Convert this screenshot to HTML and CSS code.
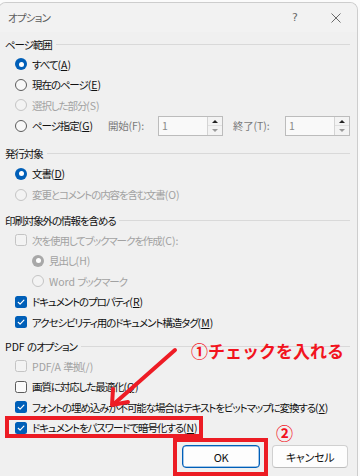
FILE: index.html
```html
<!DOCTYPE html>
<html lang="ja">
<head>
<meta charset="utf-8">
<title>オプション</title>
<link rel="stylesheet" href="styles.css">
</head>
<body>
<div class="dialog">
  <div class="titlebar">
    <span class="title">オプション</span>
    <span class="tb-help">?</span>
    <span class="tb-close"><svg width="10" height="10" viewBox="0 0 10 10"><path d="M0.5 0.5 L9.5 9.5 M9.5 0.5 L0.5 9.5" stroke="#6a6a6a" stroke-width="1" fill="none"/></svg></span>
  </div>
  <div class="content">
    <section class="group g1">
      <div class="ghead"><span>ページ範囲</span></div>
      <div class="row"><span class="radio on"></span><span>すべて<span class="lat">(<u>A</u>)</span></span></div>
      <div class="row"><span class="radio"></span><span>現在のページ<span class="lat">(<u>E</u>)</span></span></div>
      <div class="row disabled"><span class="radio"></span><span>選択した部分<span class="lat">(S)</span></span></div>
      <div class="row"><span class="radio"></span><span class="pg-label">ページ指定<span class="lat">(<u>G</u>)</span></span>
        <span class="field-label fl1">開始<span class="lat">(F):</span></span>
        <span class="spin"><span class="spin-val">1</span><span class="spin-btns"><span class="sb up"></span><span class="sb dn"></span></span></span>
        <span class="field-label fl2">終了<span class="lat">(T):</span></span>
        <span class="spin"><span class="spin-val">1</span><span class="spin-btns"><span class="sb up"></span><span class="sb dn"></span></span></span>
      </div>
    </section>
    <section class="group g2">
      <div class="ghead"><span>発行対象</span></div>
      <div class="row r21"><span class="radio on"></span><span>文書<span class="lat">(<u>D</u>)</span></span></div>
      <div class="row r21 disabled"><span class="radio"></span><span>変更とコメントの内容を含む文書<span class="lat">(O)</span></span></div>
    </section>
    <section class="group g3">
      <div class="ghead"><span>印刷対象外の情報を含める</span></div>
      <div class="row disabled"><span class="check"></span><span>次を使用してブックマークを作成<span class="lat">(C):</span></span></div>
      <div class="row sub disabled"><span class="radio on"></span><span>見出し<span class="lat">(H)</span></span></div>
      <div class="row sub disabled"><span class="radio"></span><span><span class="lat">Word </span>ブックマーク</span></div>
      <div class="row"><span class="check on"><svg width="12" height="12" viewBox="0 0 12 12"><path d="M3.2 6.3 L5.1 8.1 L8.9 4.2" stroke="#fff" stroke-width="1.2" fill="none" stroke-linecap="round" stroke-linejoin="round"/></svg></span><span>ドキュメントのプロパティ<span class="lat">(<u>R</u>)</span></span></div>
      <div class="row"><span class="check on"><svg width="12" height="12" viewBox="0 0 12 12"><path d="M3.2 6.3 L5.1 8.1 L8.9 4.2" stroke="#fff" stroke-width="1.2" fill="none" stroke-linecap="round" stroke-linejoin="round"/></svg></span><span>アクセシビリティ用のドキュメント構造タグ<span class="lat">(<u>M</u>)</span></span></div>
    </section>
    <section class="group g4">
      <div class="ghead"><span><span class="lat">PDF </span>のオプション</span></div>
      <div class="row disabled"><span class="check"></span><span><span class="lat">PDF/A </span>準拠<span class="lat">(/)</span></span></div>
      <div class="row"><span class="check"></span><span>画質に対応した最適化<span class="lat">(<u>Q</u>)</span></span></div>
      <div class="row"><span class="check on"><svg width="12" height="12" viewBox="0 0 12 12"><path d="M3.2 6.3 L5.1 8.1 L8.9 4.2" stroke="#fff" stroke-width="1.2" fill="none" stroke-linecap="round" stroke-linejoin="round"/></svg></span><span>フォントの埋め込みが不可能な場合はテキストをビットマップに変換する<span class="lat">(<u>X</u>)</span></span></div>
      <div class="row"><span class="check on"><svg width="12" height="12" viewBox="0 0 12 12"><path d="M3.2 6.3 L5.1 8.1 L8.9 4.2" stroke="#fff" stroke-width="1.2" fill="none" stroke-linecap="round" stroke-linejoin="round"/></svg></span><span>ドキュメントをパスワードで暗号化する<span class="lat">(<u>N</u>)</span></span></div>
    </section>
    <div class="buttons">
      <button class="btn default">OK</button>
      <button class="btn">キャンセル</button>
    </div>
  </div>
</div>
<div class="annot">
  <svg class="arrow" width="360" height="476" viewBox="0 0 360 476">
    <g stroke="#ee1c25" stroke-width="4" stroke-linecap="round" stroke-linejoin="round" fill="none">
      <path d="M175 350 L115 403"/>
      <path d="M113 389 L112 405 L128 402"/>
    </g>
  </svg>
  <div class="note1">①チェックを入れる</div>
  <div class="note2">②</div>
  <div class="hl hl-row"></div>
  <div class="hl hl-ok"></div>
</div>
</body>
</html>
```

FILE: styles.css
```css
html, body {
  margin: 0;
  padding: 0;
}
body {
  width: 360px;
  height: 476px;
  overflow: hidden;
  position: relative;
  background: #fbfbfb;
  font-family: "Noto Sans CJK JP", "Noto Sans", sans-serif;
  font-size: 10.5px;
  color: #111;
  font-feature-settings: "palt";
  letter-spacing: -1.1px;
}
.lat { letter-spacing: 0; }
.dialog {
  margin: 2px 0 0 -2px;
  width: 360px;
  height: 480px;
  box-sizing: border-box;
  border: 1px solid #cdcdcd;
  border-bottom: none;
  border-radius: 8px 8px 0 0;
  background: #f0f0f0;
  overflow: hidden;
}
.titlebar {
  height: 29px;
  display: flex;
  align-items: center;
  padding: 0 16px 0 9px;
  background: #f2f2f2;
}
.title {
  color: #5c5c5c;
  font-size: 10.5px;
  letter-spacing: -0.8px;
}
.tb-help {
  margin-left: auto;
  width: 12px;
  text-align: center;
  color: #6a6a6a;
  font-family: "DejaVu Sans", sans-serif;
  font-size: 11px;
  letter-spacing: 0;
}
.tb-close {
  margin-left: 30px;
  width: 10px;
  height: 10px;
  display: flex;
}
.content {
  padding: 2px 7px 0 6px;
}
.group { display: flex; flex-direction: column; }
.g2 { margin-top: 7px; }
.g3 { margin-top: 5px; }
.g4 { margin-top: 3.5px; }
.ghead {
  height: 20px;
  display: flex;
  align-items: center;
  gap: 4px;
  color: #111;
}
.ghead::after {
  content: "";
  flex: 1;
  height: 1px;
  background: #d9d9d9;
}
.row {
  height: 20.5px;
  display: flex;
  align-items: center;
  padding-left: 10px;
  white-space: nowrap;
}
.row.r21 { height: 21px; }
.row.sub { padding-left: 27px; }
.row u { text-underline-offset: 1px; }
.row.disabled { color: #a2a2a2; }

.radio {
  width: 12px;
  height: 12px;
  box-sizing: border-box;
  border-radius: 50%;
  border: 1px solid #5b5b5b;
  background: #f8f8f8;
  margin-right: 5px;
  flex: none;
  position: relative;
}
.radio.on {
  border: none;
  background: #005fb8;
}
.radio.on::after {
  content: "";
  position: absolute;
  left: 3.5px;
  top: 3.5px;
  width: 5px;
  height: 5px;
  border-radius: 50%;
  background: #fff;
}
.disabled .radio { border-color: #c4c4c4; background: #f3f3f3; }
.disabled .radio.on { border: none; background: #a8a8a8; }

.check {
  width: 12px;
  height: 12px;
  box-sizing: border-box;
  border-radius: 2.5px;
  border: 1px solid #5b5b5b;
  background: #fafafa;
  margin-right: 5px;
  flex: none;
  display: flex;
}
.check.on {
  border: none;
  background: #005fb8;
}
.disabled .check { border-color: #c4c4c4; background: #f3f3f3; }

.pg-label { width: 76px; flex: none; }
.field-label {
  color: #7a7a7a;
  flex: none;
  letter-spacing: -0.3px;
}
.fl1 { width: 50px; }
.fl2 { width: 52px; margin-left: 10px; }
.spin {
  width: 65px;
  height: 20px;
  box-sizing: border-box;
  border: 1px solid #bcbcbc;
  background: #f9f9f9;
  display: flex;
  flex: none;
}
.spin-val {
  flex: 1;
  padding-left: 3px;
  color: #8a8a8a;
  line-height: 18px;
}
.spin-btns {
  width: 14px;
  display: flex;
  flex-direction: column;
  border-left: 1px solid #d4d4d4;
}
.sb {
  flex: 1;
  position: relative;
  background: #f3f3f3;
}
.sb.up { border-bottom: 1px solid #e0e0e0; }
.sb::after {
  content: "";
  position: absolute;
  left: 4px;
  top: 3px;
  border-left: 3px solid transparent;
  border-right: 3px solid transparent;
}
.sb.up::after { border-bottom: 3px solid #222; }
.sb.dn::after { border-top: 3px solid #9a9a9a; top: 3px; }

.buttons {
  margin-top: 7px;
  display: flex;
  justify-content: flex-end;
  gap: 12px;
  padding-right: 2px;
}
.btn {
  height: 23px;
  box-sizing: border-box;
  border: 1px solid #d0d0d0;
  border-bottom-color: #bdbdbd;
  border-radius: 4px;
  background: #fdfdfd;
  font-family: "Noto Sans CJK JP", "Noto Sans", sans-serif;
  font-size: 11px;
  font-feature-settings: "palt";
  letter-spacing: -0.3px;
  color: #111;
  padding: 0;
  width: 76px;
}
.btn.default {
  width: 78px;
  border: 1px solid #005fb8;
  box-shadow: inset 0 0 0 0.5px #4a8fd3;
}

.annot {
  position: absolute;
  left: 0;
  top: 0;
  width: 360px;
  height: 476px;
  pointer-events: none;
}
.arrow { position: absolute; left: 0; top: 0; }
.note1 {
  position: absolute;
  left: 191px;
  top: 340px;
  font-size: 17px;
  line-height: 22px;
  font-weight: 700;
  color: #f2141e;
  letter-spacing: 0;
  font-feature-settings: normal;
}
.note2 {
  position: absolute;
  left: 276px;
  top: 422px;
  font-size: 17px;
  line-height: 22px;
  font-weight: 700;
  color: #f2141e;
  letter-spacing: 0;
}
.hl {
  position: absolute;
  box-sizing: border-box;
  border: 4px solid #ec1c24;
}
.hl-row { left: 5px; top: 416px; width: 198px; height: 22px; }
.hl-ok { left: 173px; top: 438px; width: 95px; height: 38px; }
```
